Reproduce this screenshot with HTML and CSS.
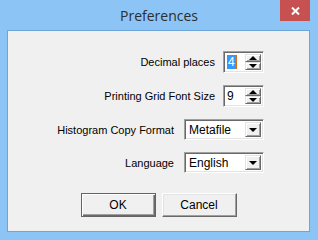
FILE: index.html
```html
<!DOCTYPE html>
<html>
<head>
<meta charset="utf-8">
<link rel="stylesheet" href="styles.css">
</head>
<body>
<div class="window">
  <div class="titlebar">
    <div class="title">Preferences</div>
    <div class="close">
      <svg width="9" height="8" viewBox="0 0 9 8"><path d="M1 0.5 L8 7.5 M8 0.5 L1 7.5" stroke="#fff" stroke-width="2" fill="none"/></svg>
    </div>
  </div>
  <div class="client">
    <div class="form">
      <div class="row spin-row">
        <span class="label">Decimal places</span>
        <div class="spin">
          <div class="field"><span class="sel">4</span><span class="caret"></span></div>
          <div class="arrows">
            <div class="arrow"><span class="tri-up"></span></div>
            <div class="arrow"><span class="tri-down"></span></div>
          </div>
        </div>
      </div>
      <div class="row spin-row">
        <span class="label">Printing Grid Font Size</span>
        <div class="spin">
          <div class="field">9</div>
          <div class="arrows">
            <div class="arrow"><span class="tri-up"></span></div>
            <div class="arrow"><span class="tri-down"></span></div>
          </div>
        </div>
      </div>
      <div class="row combo-row">
        <span class="label">Histogram Copy Format</span>
        <div class="combo">
          <div class="field">Metafile</div>
          <div class="drop"><span class="tri-down"></span></div>
        </div>
      </div>
      <div class="row combo-row">
        <span class="label">Language</span>
        <div class="combo">
          <div class="field">English</div>
          <div class="drop"><span class="tri-down"></span></div>
        </div>
      </div>
    </div>
    <div class="buttons">
      <button class="btn default">OK</button>
      <button class="btn">Cancel</button>
    </div>
  </div>
</div>
</body>
</html>
```
FILE: styles.css
```css
html, body {
  margin: 0;
  padding: 0;
}
body {
  width: 318px;
  height: 240px;
  overflow: hidden;
  background: #8cc4f6;
  font-family: "Liberation Sans", Arial, sans-serif;
  font-size: 11px;
  color: #000;
}
.window {
  display: flex;
  flex-direction: column;
  height: 240px;
}
.titlebar {
  height: 30px;
  display: grid;
  grid-template-columns: 1fr auto 1fr;
  align-items: start;
}
.title {
  grid-column: 2;
  font-family: "Open Sans", "Noto Sans", sans-serif;
  font-size: 14px;
  line-height: 31px;
  color: #2d2d2d;
}
.close {
  grid-column: 3;
  justify-self: end;
  margin-right: 8px;
  width: 30px;
  height: 21px;
  background: #c75050;
  display: flex;
  align-items: center;
  justify-content: center;
}
.client {
  flex: 1;
  margin: 0 8px 8px 7px;
  border: 1px solid #6ea5d9;
  background: #f0f0f0;
  display: flex;
  flex-direction: column;
}
.form {
  display: grid;
  grid-template-rows: 22px 22px 21px 21px;
  row-gap: 12px;
  padding-top: 20px;
  padding-right: 45px;
}
.row {
  display: flex;
  justify-content: flex-end;
  align-items: center;
}
.spin-row { gap: 8px; }
.combo-row { gap: 10px; }
.label {
  white-space: nowrap;
}
.spin, .combo {
  box-sizing: border-box;
  height: 100%;
  display: flex;
  background: #fff;
  border: 1px solid;
  border-color: #a0a0a0 #fff #fff #a0a0a0;
  box-shadow: inset 1px 1px #696969, inset -1px -1px #e3e3e3;
  padding: 2px;
}
.spin { width: 41px; }
.combo { width: 80px; }
.field {
  flex: 1;
  display: flex;
  align-items: center;
  padding-left: 1px;
  font-size: 12px;
  line-height: 14px;
}
.combo .field { padding-left: 2px; }
.sel {
  background: #3399ff;
  color: #fff;
  padding: 0 1px;
}
.caret {
  width: 1px;
  height: 14px;
  background: #e56a10;
}
.arrows {
  width: 16px;
  display: flex;
  flex-direction: column;
}
.arrow, .drop {
  box-sizing: border-box;
  flex: 1;
  background: #f0f0f0;
  border: 1px solid;
  border-color: #e3e3e3 #696969 #696969 #e3e3e3;
  box-shadow: inset 1px 1px #fff, inset -1px -1px #a0a0a0;
  display: flex;
  align-items: center;
  justify-content: center;
}
.drop {
  flex: none;
  width: 16px;
}
.tri-up {
  width: 0;
  height: 0;
  border-left: 4px solid transparent;
  border-right: 4px solid transparent;
  border-bottom: 4px solid #000;
}
.tri-down {
  width: 0;
  height: 0;
  border-left: 4px solid transparent;
  border-right: 4px solid transparent;
  border-top: 4px solid #000;
}
.buttons {
  display: flex;
  justify-content: center;
  gap: 6px;
  margin-top: 20px;
}
.btn {
  box-sizing: border-box;
  width: 75px;
  height: 24px;
  padding: 0;
  font-family: "Liberation Sans", Arial, sans-serif;
  font-size: 12px;
  color: #000;
  background: #f0f0f0;
  border: 1px solid;
  border-color: #fff #696969 #696969 #fff;
  box-shadow: inset -1px -1px #a0a0a0, inset 1px 1px #e3e3e3;
}
.btn.default {
  border: 1px solid #646464;
  box-shadow: inset 1px 1px #fff, inset -1px -1px #696969, inset -2px -2px #a0a0a0;
}
```
